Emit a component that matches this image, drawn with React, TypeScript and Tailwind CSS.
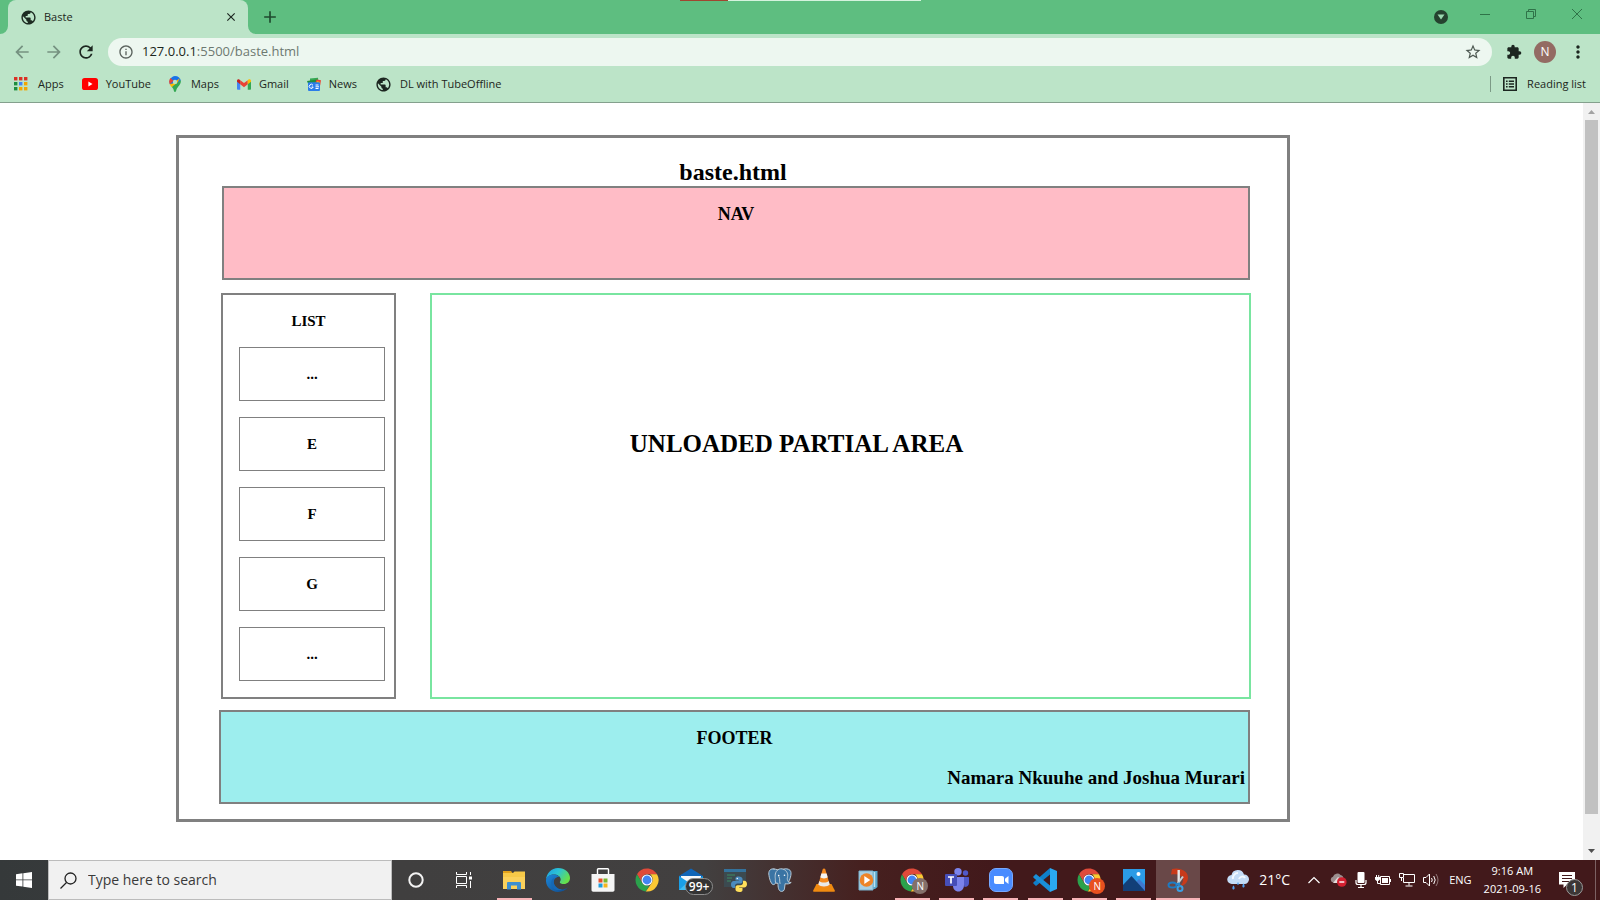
import type { ReactNode } from "react";
import {
  MdArrowBack,
  MdArrowForward,
  MdClose,
  MdExtension,
  MdInfoOutline,
  MdMoreVert,
  MdPublic,
  MdRefresh,
  MdStarBorder,
  MdAdd,
} from "react-icons/md";

/* ---------- Bookmark icons ---------- */

function AppsIcon() {
  const colors = ["#d93025", "#d93025", "#d93025", "#1e8e3e", "#4285f4", "#f2a600", "#1e8e3e", "#f2a600", "#f2a600"];
  return (
    <svg viewBox="0 0 14 14" className="h-3.5 w-3.5">
      {colors.map((c, i) => (
        <rect key={i} x={(i % 3) * 5} y={Math.floor(i / 3) * 5} width="3.4" height="3.4" fill={c} />
      ))}
    </svg>
  );
}

function YouTubeIcon() {
  return (
    <svg viewBox="0 0 16 12" className="h-3 w-4">
      <rect width="16" height="12" rx="2.6" fill="#f00" />
      <path d="M6.4 3.6v4.8L10.5 6z" fill="#fff" />
    </svg>
  );
}

function MapsIcon() {
  return (
    <svg viewBox="0 0 12 16" className="h-4 w-3">
      <path d="M6 0a6 6 0 0 1 5.8 4.5L5 11 1.200 8.800A6 6 0 0 1 6 0z" fill="#1a73e8" />
      <path d="M1.400 2.100 4.500 4.700 0.800 8.200A6 6 0 0 1 1.400 2.100z" fill="#ea4335" />
      <path d="M4.300 7.200 11 1.900 8 7.500 2.600 11.300 0.700 8.200z" fill="#fbbc04" />
      <path d="M11.700 4.200C12.600 8 9 10 7.800 12.800 7.200 14.200 7.100 16 6 16s-1.100-1.800-1.800-3.200L2.900 11z" fill="#34a853" />
      <circle cx="6" cy="5.900" r="2.200" fill="#bce4c8" />
    </svg>
  );
}

function GmailIcon() {
  return (
    <svg viewBox="0 0 16 12" className="h-[11px] w-3.5">
      <path d="M0 2v8.800C0 11.500.5 12 1.200 12H3.700V4.500z" fill="#4285f4" />
      <path d="M12.300 12h2.500c.7 0 1.200-.5 1.200-1.200V2l-3.700 2.500z" fill="#34a853" />
      <path d="M3.700 1.200v4.500L8 9l4.300-3.300V1.200L8 4.400z" fill="#ea4335" />
      <path d="M12.300 1.200v4.500L16 2.900V1.800C16 .3 14.300-.5 13.100.4z" fill="#fbbc04" />
      <path d="M0 2.900l3.700 2.800V1.200L2.900.5C1.700-.4 0 .3 0 1.800z" fill="#c5221f" />
    </svg>
  );
}

function NewsIcon() {
  return (
    <svg viewBox="0 0 14 14" className="h-3.5 w-3.5">
      <path d="M3 1.500l8-.8.5 5H3z" fill="#34a853" />
      <path d="M0 4 10 2.500l1 4H1z" fill="#1e8e3e" />
      <path d="M9.500 2.500l4.500.8-.8 5-5-2z" fill="#ea4335" />
      <path d="M10 4l3 1-.5 3-3-1z" fill="#fbbc04" />
      <rect x="1" y="5.200" width="12" height="8.800" rx="1" fill="#2b7de9" />
      <path d="M6 8.300a2 2 0 1 0 .2 1.700H4.600M8.500 8h3M8.500 9.800h3.500M8.500 11.500h3" fill="none" stroke="#fff" strokeWidth="1" />
    </svg>
  );
}

function ReadingListIcon() {
  return (
    <svg viewBox="0 0 14 14" className="h-3.5 w-3.5">
      <path d="M.8.8h12.400v12.400H.8z" fill="none" stroke="currentColor" strokeWidth="1.600" />
      <path d="M3 4.200h1.600M3 7h1.600M3 9.800h1.600M5.800 4.200H11M5.800 7H11M5.800 9.800H11" stroke="currentColor" strokeWidth="1.500" />
    </svg>
  );
}

/* ---------- Taskbar icons ---------- */

function ExplorerIcon() {
  return (
    <svg viewBox="0 0 24 24" className="h-6 w-6">
      <path d="M1 3h8l2 2.500v4H1z" fill="#e3a21a" />
      <path d="M1 5.500h22V21H1z" fill="#fbd15b" />
      <path d="M1 5h10l1.500-1.500H23V9H1z" fill="#f7c948" />
      <path d="M5 21.500v-6.300c0-.8.500-1.200 1.200-1.200h11.600c.7 0 1.200.4 1.200 1.200v6.300h-4v-4H9v4z" fill="#3d8fd1" />
    </svg>
  );
}

function EdgeIcon() {
  return (
    <svg viewBox="0 0 24 24" className="h-6 w-6">
      <defs>
        <linearGradient id="edgeTop" x1="0" y1="0" x2="1" y2="0.500">
          <stop offset="0" stopColor="#1b9de2" />
          <stop offset=".5" stopColor="#2cc3d5" />
          <stop offset="1" stopColor="#66e04b" />
        </linearGradient>
        <linearGradient id="edgeBottom" x1="0" y1="0" x2="1" y2="1">
          <stop offset="0" stopColor="#1b86d9" />
          <stop offset="1" stopColor="#114a8b" />
        </linearGradient>
      </defs>
      <path d="M0 12C.4 5 5.500 0 12 0c7 0 12 4.800 12 10 0 3.800-2.900 6-6 6-2.500 0-4.200-.9-4.200-1.800 0-.6.900-1 .9-2.600C14.700 8.500 11.500 6.500 8 6.500c-4.500 0-7.500 2.700-8 5.500z" fill="url(#edgeTop)" />
      <path d="M0 12c.4-3.200 3.500-5.500 7.500-5.500 3 0 5 1.200 6 2.700-3.200-.7-5.800 2-5.800 5 0 4 3.800 7.200 8 7.200 2.600 0 4.500-.7 6.100-1.800C19.800 22.400 16.300 24 12 24 5 24-.4 18.500 0 12z" fill="url(#edgeBottom)" />
      <path d="M9.300 9.700c-1.300 1-1.900 2.700-1.600 4.500.5 4 4.300 7.200 8.500 7.200-5.800 2.400-11.400-1.500-11-7 .2-2.500 1.800-4.400 4.100-4.700z" fill="#1668b5" />
    </svg>
  );
}

function StoreIcon() {
  return (
    <svg viewBox="0 0 24 24" className="h-6 w-6">
      <path d="M6.500 7V1.500c0-.5.300-.8.800-.8h9.400c.5 0 .8.300.8.800V7" fill="none" stroke="#fff" strokeWidth="1.400" />
      <path d="M.5 6h23v16c0 1-.7 1.700-1.700 1.700H2.200c-1 0-1.700-.7-1.700-1.700z" fill="#f5f5f5" />
      <path d="M7.500 10.500h4v4h-4z" fill="#e8502c" />
      <path d="M12.500 10.500h4v4h-4z" fill="#7db72f" />
      <path d="M7.500 15.500h4v4h-4z" fill="#1f9ede" />
      <path d="M12.500 15.500h4v4h-4z" fill="#f6b51e" />
    </svg>
  );
}

function ChromeIcon() {
  return (
    <svg viewBox="0 0 24 24" className="h-6 w-6">
      <path d="M12 .5c4.300 0 8 2.300 10 5.800H12A5.700 5.700 0 0 0 7 14.800L2 6.300A11.500 11.500 0 0 1 12 .5z" fill="#e04a3a" />
      <path d="M2 6.300l5 8.500a5.700 5.700 0 0 0 5 2.900l2 .2-3.200 5.500A11.500 11.500 0 0 1 2 6.300z" fill="#2ba24c" />
      <path d="M22 6.300a11.500 11.500 0 0 1-11.200 17.200l6.100-8.700c1.700-3 .7-6.500-1.900-8.500z" fill="#fcc934" />
      <circle cx="12" cy="12" r="5.500" fill="#fff" />
      <circle cx="12" cy="12" r="4.400" fill="#4285f4" />
    </svg>
  );
}

function MailIcon() {
  return (
    <svg viewBox="0 0 24 24" className="h-6 w-6">
      <path d="M0 8 12 0.500 24 8v14H0z" fill="#0f65b8" />
      <path d="M2 8h20v10H2z" fill="#f4f7fa" />
      <path d="M0 8l12 8 12-8v14H0z" fill="#1a9fe8" />
      <path d="M0 22l9-8 3 2 3-2 9 8z" fill="#40bdf3" />
    </svg>
  );
}

function PythonIcon() {
  return (
    <svg viewBox="0 0 24 24" className="h-6 w-6">
      <path d="M1 1h22v18H1z" fill="#3c4a50" />
      <path d="M1 1h22v3H1z" fill="#34729c" />
      <path d="M4 7h8M4 10h5M4 13h4" stroke="#3d8b62" strokeWidth="1" />
      <path d="M15.500 8.500c-3 0-3 1.300-3 2.500v1.500h3.300v.6h-5c-1.700 0-2.800 1.300-2.800 3.400s1 3.500 2.500 3.500H12v-2c0-1.500 1-2.500 2.500-2.500h3c1.200 0 2-1 2-2V11c0-1.500-1.300-2.500-4-2.500z" fill="#4b8bbe" />
      <path d="M16.500 24c3 0 3-1.300 3-2.500V20h-3.300v-.6h5c1.700 0 2.800-1.300 2.800-3.200 0-2.100-1-3.400-2.500-3.400H20v2c0 1.500-1 2.500-2.500 2.500h-3c-1.200 0-2 1-2 2v2.200c0 1.500 1.300 2.500 4 2.500z" fill="#ffdf5a" />
      <circle cx="14.300" cy="10.500" r=".7" fill="#fff" />
    </svg>
  );
}

function PostgresIcon() {
  return (
    <svg viewBox="0 0 24 24" className="h-6 w-6" strokeLinejoin="round" strokeLinecap="round">
      <path d="M6 1C2.500.3.600 2.600.8 6c.3 4 2.200 10 4.200 10.600 1 .2 2-.6 2.800-1.600l2.200.4c0 3 .2 7.900 3.500 8 3 .1 3-2.500 3.300-5.400l.4-2.300c2.200.6 4.600.1 6-1.300-1 .2-2 .1-2.600-.3C22.500 10 24.200 4.500 22 2.300 20.200.600 17.500.5 15.500 1.200 13.500.6 11.500.6 9.700 1.800 8.500 1.300 7.300 1.100 6 1z" fill="#3a74a4" stroke="#b9cad6" strokeWidth="1" />
      <path d="M9.700 1.800C6.800 4 7 8 7.300 10.500c.2 1.700-.4 3 .5 4.500M15.500 1.200c3 1.300 4.700 4.400 4.200 7-.2 1.600-1.300 3 .9 5.900M12 15.500c-.8-2.500.300-4.500-1-6.800" fill="none" stroke="#b9cad6" strokeWidth="1" />
      <circle cx="10.700" cy="7.500" r=".8" fill="#fff" />
      <circle cx="16.500" cy="7.200" r=".8" fill="#fff" />
    </svg>
  );
}

function VlcIcon() {
  return (
    <svg viewBox="0 0 24 24" className="h-6 w-6">
      <path d="M4.500 16h15l3.300 6.500c.3.800-.2 1.300-1 1.300H2.200c-.8 0-1.300-.5-1-1.300z" fill="#f08a10" />
      <path d="M10.800 1c.3-.8 2.100-.8 2.400 0L18 17.500c-2 3-10 3-12 0z" fill="#f58a1f" />
      <path d="M9.400 5.500h5.200l1.100 3.800c-1.500 1.500-5.900 1.500-7.400 0z" fill="#f3f3f3" />
      <path d="M7.300 13c2 2 7.400 2 9.400 0l1 3.600c-2 2.500-9.400 2.500-11.400 0z" fill="#e9e9e9" />
    </svg>
  );
}

function MediaPlayerIcon() {
  return (
    <svg viewBox="0 0 24 24" className="h-6 w-6">
      <path d="M6 3h15.500v16L19 21H6z" fill="#5aa6ca" />
      <path d="M3 3h14v19H3z" fill="#a9cfe2" stroke="#78b3d0" />
      <path d="M18.500 4v15" stroke="#bde3f2" strokeWidth="1.500" />
      <circle cx="10.500" cy="12" r="6.800" fill="#ee8427" />
      <path d="M8.300 8v8l6-4z" fill="#fff" />
    </svg>
  );
}

function TeamsIcon() {
  return (
    <svg viewBox="0 0 24 24" className="h-6 w-6">
      <circle cx="20.500" cy="5" r="2.700" fill="#5059c9" />
      <circle cx="13" cy="3.700" r="3.700" fill="#7b83eb" />
      <path d="M17 9h6.500c.4 0 .5.300.5.600V15c0 2.700-2 4-4.500 4z" fill="#5059c9" />
      <path d="M8 9h11v8c0 4-2.500 6.500-5.700 6.500S8 21 8 17.500z" fill="#7b83eb" />
      <rect x="0" y="6" width="12" height="12" rx="1" fill="#464eb8" />
      <path d="M3 9h6M6 9v6.500" stroke="#fff" strokeWidth="1.700" />
    </svg>
  );
}

function ZoomIcon() {
  return (
    <svg viewBox="0 0 24 24" className="h-6 w-6">
      <rect x=".5" y=".5" width="23" height="23" rx="6.500" fill="#4a8cff" stroke="#78a9ff" />
      <path d="M5 8h8c1.300 0 2 .8 2 2v6H7c-1.300 0-2-.8-2-2zM16 10.800 19.500 8v8L16 13.300z" fill="#fff" />
    </svg>
  );
}

function VsCodeIcon() {
  return (
    <svg viewBox="0 0 24 24" className="h-6 w-6">
      <path d="M17 0l7 3v18l-7 3z" fill="#2aa9f2" />
      <path d="M17 0v6.500L3 18 .3 15.600v-1.200z" fill="#0f7fca" />
      <path d="M17 24v-6.500L3 6 .3 8.400v1.200z" fill="#1a8fd8" />
    </svg>
  );
}

function PhotosIcon() {
  return (
    <svg viewBox="0 0 24 24" className="h-6 w-6">
      <path d="M1 1h22v22H1z" fill="#2b9be6" />
      <path d="M12 16l5-5 6 6v6H12z" fill="#3f78cf" />
      <path d="M1 17l8.500-9L23 23H1z" fill="#123f78" />
      <circle cx="16.500" cy="6" r="2" fill="#fff" />
    </svg>
  );
}

function SnipIcon() {
  return (
    <svg viewBox="0 0 24 24" className="h-6 w-6">
      <path d="M6 1c8-2 16 2 16 8.500 0 5-3.500 8-8 8.500 2.500-2 3.500-5 2.800-7.500C15.800 7 11 5.500 5 6.500z" fill="#c93a1a" />
      <path d="M12.700 2v14" stroke="#e6e6e6" strokeWidth="2.400" />
      <path d="M17 8.500 11.500 16" stroke="#c9cdd0" strokeWidth="2" />
      <ellipse cx="6.500" cy="17" rx="4" ry="2.600" fill="none" stroke="#1e7bc2" strokeWidth="2" />
      <circle cx="14" cy="20.500" r="2.500" fill="none" stroke="#3aa0e4" strokeWidth="2" />
      <path d="M10 16.500l3-1 .8 3" fill="none" stroke="#2a86cc" strokeWidth="2" />
    </svg>
  );
}

function WeatherIcon() {
  return (
    <svg viewBox="0 0 22 20" className="h-5 w-[22px]">
      <path d="M5 14a4.500 4.500 0 0 1-.5-9A6.500 6.500 0 0 1 17 4.500a4.600 4.600 0 0 1 .5 9.500z" fill="#c4dcf7" />
      <path d="M6 9a5 5 0 0 1 5-6M12 9c1-3 5-3 6-1" fill="none" stroke="#f2f8ff" strokeWidth="2" />
      <path d="M6.500 15.500c1.500 1.500 1.500 4 0 4s-1.500-2.500 0-4zM16.500 13.500c1.500 1.500 1.500 4 0 4s-1.500-2.500 0-4zM11 12c1 1 1 3 0 3s-1-2 0-3z" fill="#4da0ef" />
    </svg>
  );
}

function OneDriveIcon() {
  return (
    <svg viewBox="0 0 17 14" className="h-3.5 w-[17px]">
      <path d="M3 9.500a3 3 0 0 1 0-5.800A4.500 4.500 0 0 1 10.500 2a4 4 0 0 1 3 4v3.500z" fill="#9c8f8f" />
      <path d="M3 10l5-6 4 3-2 3z" fill="#e4dede" />
      <circle cx="11.800" cy="9" r="4.800" fill="#d32030" />
      <path d="M9.300 9h5" stroke="#fff" strokeWidth="1.400" />
    </svg>
  );
}

function MicIcon() {
  return (
    <svg viewBox="0 0 12 16" className="h-4 w-3">
      <rect x="2.500" y="0" width="7" height="11" rx="1" fill="#fff" />
      <path d="M1 8v2.500c0 1.300.9 2 2 2h6c1.200 0 2-.7 2-2V8M6 12.500V15M3 15.500h6" fill="none" stroke="#fff" strokeWidth="1.200" />
    </svg>
  );
}

function BatteryIcon() {
  return (
    <svg viewBox="0 0 16 12" className="h-3 w-4">
      <path d="M5.500 2.500h9v8h-9z" fill="none" stroke="#fff" />
      <path d="M7 4h6v5H7zM15 5h1v3h-1zM0 3h5v2.500L3.300 7H1.700L0 5.500zM1 1h1v2H1zM3.200 1h1v2h-1z" fill="#fff" />
      <path d="M2.500 7v2.500H6" fill="none" stroke="#fff" />
    </svg>
  );
}

function NetworkIcon() {
  return (
    <svg viewBox="0 0 16 14" className="h-3.5 w-4">
      <path d="M5 1.500h10.500v8H4.500V5M10 9.500v3M6.500 13h7M.5.5h4v4h-4zM2.500 4.500V8" fill="none" stroke="#fff" />
    </svg>
  );
}

function SpeakerIcon() {
  return (
    <svg viewBox="0 0 16 14" className="h-3.5 w-4">
      <path d="M.5 4.500h2.500l3.500-3.500v12L3 9.500H.5zM8.500 5q1.500 2 0 4M10.700 3q3 4 0 8" fill="none" stroke="#fff" />
      <path d="M13 1q4 6 0 12" fill="none" stroke="#917777" />
    </svg>
  );
}

function NotificationIcon() {
  return (
    <svg viewBox="0 0 16 16" className="h-4 w-4">
      <path d="M0 0h16v12.500H8L4.500 16v-3.500H0z" fill="#fff" />
      <path d="M3 3.500h10M3 6.500h10M3 9.500h7" stroke="#42191b" />
    </svg>
  );
}

/* ---------- Browser chrome ---------- */

const bookmarks: { label: string; icon: ReactNode; gap: string }[] = [
  { label: "Apps", icon: <AppsIcon />, gap: "gap-2.5" },
  { label: "YouTube", icon: <YouTubeIcon />, gap: "gap-2" },
  { label: "Maps", icon: <MapsIcon />, gap: "gap-2.5" },
  { label: "Gmail", icon: <GmailIcon />, gap: "gap-2" },
  { label: "News", icon: <NewsIcon />, gap: "gap-2" },
  { label: "DL with TubeOffline", icon: <MdPublic className="h-[17px] w-[17px]" />, gap: "gap-2" },
];

function TabStrip() {
  return (
    <div className="relative flex h-[34px] items-center bg-[#5ebe80]">
      <div className="absolute left-[680px] top-0 flex h-px w-[241px]">
        <span className="w-12 bg-[#a0462f]" />
        <span className="flex-1 bg-[#d5f3de]" />
      </div>
      <svg viewBox="0 0 8 8" className="h-2 w-2 self-end">
        <path d="M8 0v8H0a8 8 0 0 0 8-8z" fill="#bce4c8" />
      </svg>
      <div className="flex h-[34px] w-60 items-center rounded-t-lg bg-[#bce4c8] pl-3 pr-2.5">
        <MdPublic className="h-[17px] w-[17px] text-[#1d2b22]" />
        <span className="ml-[7px] flex-1 text-[11px]">Baste</span>
        <button aria-label="Close tab">
          <MdClose className="h-3.5 w-3.5" />
        </button>
      </div>
      <svg viewBox="0 0 8 8" className="h-2 w-2 self-end">
        <path d="M0 0v8h8a8 8 0 0 1-8-8z" fill="#bce4c8" />
      </svg>
      <button aria-label="New tab" className="ml-1">
        <MdAdd className="h-5 w-5 text-[#1f4a2e]" />
      </button>
      <div className="ml-auto flex items-center text-[#2f7348]">
        <button aria-label="Search tabs" className="mr-8 flex h-3.5 w-3.5 items-center justify-center rounded-full bg-[#25422f]">
          <svg viewBox="0 0 8 6" className="h-1.5 w-2">
            <path d="M.5 .5h7L4 5.500z" fill="#9bd8b0" />
          </svg>
        </button>
        <button aria-label="Minimize" className="mb-1.5 mr-9">
          <svg viewBox="0 0 10 10" className="h-2.5 w-2.5">
            <path d="M0 5.500h10" stroke="currentColor" />
          </svg>
        </button>
        <button aria-label="Restore" className="mb-1.5 mr-9">
          <svg viewBox="0 0 10 10" className="h-2.5 w-2.5">
            <path d="M.5 2.500h7v7h-7zM2.500 2.500v-2h7v7h-2" fill="none" stroke="currentColor" />
          </svg>
        </button>
        <button aria-label="Close window" className="mb-1.5 mr-[18px]">
          <svg viewBox="0 0 10 10" className="h-2.5 w-2.5">
            <path d="M0 0l10 10M10 0L0 10" stroke="currentColor" />
          </svg>
        </button>
      </div>
    </div>
  );
}

function Toolbar() {
  return (
    <div className="flex h-9 items-center pl-3 pr-3 text-[#1c2620]">
      <button aria-label="Back" className="text-[#759180]">
        <MdArrowBack className="h-5 w-5" />
      </button>
      <button aria-label="Forward" className="ml-3 text-[#759180]">
        <MdArrowForward className="h-5 w-5" />
      </button>
      <button aria-label="Reload" className="ml-3">
        <MdRefresh className="h-5 w-5" />
      </button>
      <div className="ml-3 flex h-7 flex-1 items-center rounded-full bg-[#edf7f0] pl-2.5 pr-2.5">
        <MdInfoOutline className="h-4 w-4 text-[#5a625d]" />
        <p className="ml-2 flex-1 text-[13px]" role="textbox" aria-label="Address">
          127.0.0.1<span className="text-[#6d7971]">:5500/baste.html</span>
        </p>
        <button aria-label="Bookmark this page">
          <MdStarBorder className="h-[18px] w-[18px] text-[#4d5851]" />
        </button>
      </div>
      <button aria-label="Extensions" className="ml-3.5">
        <MdExtension className="h-4 w-4" />
      </button>
      <button aria-label="Profile" className="ml-3 flex h-[22px] w-[22px] items-center justify-center rounded-full bg-[#936b63] text-xs text-white">
        N
      </button>
      <button aria-label="Menu" className="ml-3">
        <MdMoreVert className="h-5 w-5" />
      </button>
    </div>
  );
}

function BookmarkBar() {
  return (
    <nav aria-label="Bookmarks" className="box-content flex h-7 items-center border-b border-[#84a08d] pb-1 pl-3.5 pr-3.5 text-[11px] text-[#1c2620]">
      <div className="flex items-center gap-[18px]">
        {bookmarks.map((b) => (
          <a key={b.label} href="#" className={`flex items-center whitespace-nowrap ${b.gap}`}>
            {b.icon}
            {b.label}
          </a>
        ))}
      </div>
      <button className="ml-auto flex items-center whitespace-nowrap">
        <span className="mr-3 h-4 w-px bg-[#7c9a86]" />
        <span className="mr-2.5">
          <ReadingListIcon />
        </span>
        Reading list
      </button>
    </nav>
  );
}

/* ---------- Page content ---------- */

function WireframePage() {
  return (
    <main className="min-w-0 flex-1 bg-white pl-44 pr-[293px] pt-8 text-center font-['Liberation_Serif',serif] font-bold text-black">
      <div className="border-[3px] border-[#808080] pb-[15px] pl-10 pr-9 pt-5">
        <h1 className="pr-1 text-2xl leading-7">baste.html</h1>
        <nav className="ml-[3px] mr-px h-[94px] border-2 border-[#808080] bg-[#ffbcc6] pt-3">
          <h2 className="text-lg leading-7">NAV</h2>
        </nav>
        <div className="ml-0.5 mt-[13px] flex gap-[34px]">
          <aside className="w-[175px] border-2 border-[#808080] pb-4 pt-3.5">
            <h3 className="text-[15px] leading-6">LIST</h3>
            <ul className="ml-4 mr-[9px] mt-3.5 flex flex-col gap-4">
              {["...", "E", "F", "G", "..."].map((item, i) => (
                <li key={i} className="flex h-[54px] items-center justify-center border border-[#808080] text-[15px]">
                  {item}
                </li>
              ))}
            </ul>
          </aside>
          <section className="flex-1 border-2 border-[#79e5a0] pr-[88px] pt-[133px]">
            <h2 className="text-[25px] leading-8">UNLOADED PARTIAL AREA</h2>
          </section>
        </div>
        <footer className="mr-px mt-[11px] h-[94px] border-2 border-[#808080] bg-[#9deeee] pt-3">
          <h2 className="text-lg leading-7">FOOTER</h2>
          <p className="mt-3 pr-[3px] text-right text-[19px] leading-7">Namara Nkuuhe and Joshua Murari</p>
        </footer>
      </div>
    </main>
  );
}

function ScrollBar() {
  return (
    <div aria-hidden="true" className="flex w-[17px] flex-col items-center bg-[#f1f1f1]">
      <svg viewBox="0 0 17 17" className="h-[17px] w-[17px]">
        <path d="M5 11l3.500-4L12 11z" fill="#a3a3a3" />
      </svg>
      <div className="w-[13px] flex-1 bg-[#c1c1c1]" />
      <svg viewBox="0 0 17 46" className="h-[46px] w-[17px]">
        <path d="M5 35l3.500 4L12 35z" fill="#505050" />
      </svg>
    </div>
  );
}

/* ---------- Taskbar ---------- */

function Badge({ text, color }: { text: string; color: string }) {
  return (
    <span className={`absolute left-3 top-2.5 flex h-4 w-4 items-center justify-center rounded-full text-[10px] text-white ${color}`}>
      {text}
    </span>
  );
}

const apps: { name: string; icon: ReactNode; badge?: ReactNode; open?: boolean; active?: boolean }[] = [
  { name: "File Explorer", icon: <ExplorerIcon />, open: true },
  { name: "Edge", icon: <EdgeIcon /> },
  { name: "Store", icon: <StoreIcon /> },
  { name: "Chrome", icon: <ChromeIcon /> },
  {
    name: "Mail",
    icon: <MailIcon />,
    badge: (
      <span className="absolute left-1.5 top-2.5 flex h-[17px] w-7 items-center justify-center rounded-full border border-[#8d8d8d] bg-[#333] text-xs font-semibold text-white">
        99+
      </span>
    ),
  },
  { name: "Python", icon: <PythonIcon /> },
  { name: "PostgreSQL", icon: <PostgresIcon /> },
  { name: "VLC", icon: <VlcIcon /> },
  { name: "Media Player", icon: <MediaPlayerIcon /> },
  { name: "Chrome profile", icon: <ChromeIcon />, badge: <Badge text="N" color="bg-[#84706a]" />, open: true },
  { name: "Teams", icon: <TeamsIcon />, open: true },
  { name: "Zoom", icon: <ZoomIcon />, open: true },
  { name: "Visual Studio Code", icon: <VsCodeIcon />, open: true },
  { name: "Chrome second profile", icon: <ChromeIcon />, badge: <Badge text="N" color="bg-[#e8501f]" />, open: true },
  { name: "Photos", icon: <PhotosIcon />, open: true },
  { name: "Snipping Tool", icon: <SnipIcon />, open: true, active: true },
];

function Taskbar() {
  return (
    <footer className="flex h-10 items-center bg-[linear-gradient(90deg,#35393a_0%,#403f3f_25%,#424040_44%,#46201f_54%,#42191b_62%,#42191b_100%)] text-white">
      <button aria-label="Start" className="flex h-10 w-12 items-center justify-center">
        <svg viewBox="0 0 16 16" className="h-4 w-4">
          <path d="M0 2.200 6.500 1.300v6.200H0zM7.300 1.200 16 0v7.500H7.300zM0 8.300h6.500v6.300L0 13.700zM7.300 8.300H16V16l-8.700-1.200z" fill="#fff" />
        </svg>
      </button>
      <label className="flex h-10 w-[344px] items-center border border-[#bcbcbc] bg-[#f1f1f1] pl-[11px]">
        <svg viewBox="0 0 17 17" className="h-[17px] w-[17px]">
          <circle cx="10.500" cy="6.500" r="5.500" fill="none" stroke="#222" strokeWidth="1.300" />
          <path d="M6.500 10.500 .5 16.500" stroke="#222" strokeWidth="1.300" />
        </svg>
        <input
          type="text"
          aria-label="Search"
          placeholder="Type here to search"
          className="ml-[11px] min-w-0 flex-1 bg-transparent text-sm text-[#333] outline-none placeholder:text-[#3a3a3a]"
        />
      </label>
      <button aria-label="Cortana" className="flex h-10 w-12 items-center justify-center">
        <svg viewBox="0 0 16 16" className="h-4 w-4">
          <circle cx="8" cy="8" r="6.700" fill="none" stroke="#f3f3f3" strokeWidth="2" />
        </svg>
      </button>
      <button aria-label="Task view" className="flex h-10 w-12 items-center justify-center">
        <svg viewBox="0 0 16 16" className="h-4 w-4">
          <path d="M.5 0v2.500h10V0M.5 16v-2.500h10V16M.5 4.500h10v7H.5zM14.500 0v3M14.500 9v7" fill="none" stroke="#fff" />
          <path d="M13 4.500h3v3h-3z" fill="#fff" />
        </svg>
      </button>
      <div className="ml-1 flex w-[708px]">
        {apps.map((app) => (
          <button
            key={app.name}
            aria-label={app.name}
            className={`flex h-10 flex-1 flex-col items-center ${app.active ? "bg-[#694848]" : ""}`}
          >
            <span className="relative mt-2 h-6 w-6">
              {app.icon}
              {app.badge}
            </span>
            {app.open && <span className={`mt-1.5 h-0.5 bg-[#f7b3b7] ${app.active ? "w-full" : "w-[35px]"}`} />}
          </button>
        ))}
      </div>
      <div className="ml-auto flex items-center text-[11px]">
        <WeatherIcon />
        <span className="ml-2.5 mr-[18px] text-sm">21°C</span>
        <div className="flex items-center gap-2">
          <svg viewBox="0 0 12 8" className="mr-0.5 h-2 w-3">
            <path d="M.5 7 6 1.500 11.500 7" fill="none" stroke="#fff" strokeWidth="1.200" />
          </svg>
          <OneDriveIcon />
          <MicIcon />
          <BatteryIcon />
          <NetworkIcon />
          <SpeakerIcon />
        </div>
        <span className="ml-2.5">ENG</span>
        <time className="ml-3 text-center leading-[18px]">
          9:16 AM
          <br />
          2021-09-16
        </time>
        <button aria-label="Notifications" className="relative ml-[18px] mr-5">
          <NotificationIcon />
          <span className="absolute left-[7px] top-[7px] flex h-[17px] w-[17px] items-center justify-center rounded-full border border-[#9a9a9a] bg-[#3c3636] text-xs">
            1
          </span>
        </button>
        <span className="mr-1 h-10 w-px bg-[#7c6163]" />
      </div>
    </footer>
  );
}

export default function App() {
  return (
    <div className="flex min-h-screen flex-col font-['Open_Sans','Noto_Sans',sans-serif] text-[#1c2620]">
      <header className="bg-[#bce4c8]">
        <TabStrip />
        <Toolbar />
        <BookmarkBar />
      </header>
      <div className="flex flex-1">
        <WireframePage />
        <ScrollBar />
      </div>
      <Taskbar />
    </div>
  );
}
